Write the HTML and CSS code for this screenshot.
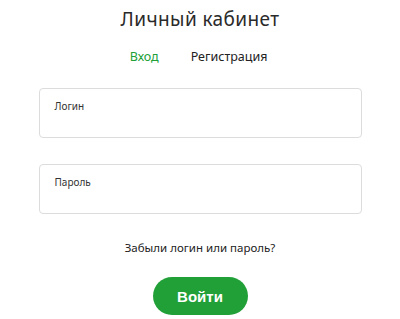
FILE: index.html
```html
<!DOCTYPE html>
<html lang="ru">
  <head>
    <meta charset="UTF-8" />
    <meta name="viewport" content="width=device-width, initial-scale=1.0" />
    <title>Личный кабинет</title>
    <link rel="stylesheet" href="styles.css">
  </head>
  <body>
    <div class="cabinet">
      <h1 class="title">Личный кабинет</h1>
      <ul class="tabs">
        <li class="active"><a href="#">Вход</a></li>
        <li><a href="#">Регистрация</a></li>
      </ul>
      <form class="form">
        <label class="field">
          <span class="field-label">Логин</span>
          <input type="text" />
        </label>
        <label class="field">
          <span class="field-label">Пароль</span>
          <input type="password" />
        </label>
        <a class="forgot" href="#">Забыли логин или пароль?</a>
        <button class="submit" type="button">Войти</button>
      </form>
    </div>
  </body>
</html>
```

FILE: styles.css
```css
* {
  margin: 0;
  padding: 0;
  box-sizing: border-box;
}
ul {
  list-style: none;
}
a {
  text-decoration: none;
  color: inherit;
}
body {
  font-family: "Noto Sans", "Open Sans", sans-serif;
  color: #222;
  background: #fff;
}
.cabinet {
  width: 323px;
  margin: 0 auto;
  padding-top: 5px;
  display: flex;
  flex-direction: column;
  align-items: center;
}
.title {
  font-size: 19px;
  font-weight: 400;
  line-height: 28px;
  color: #2a2a2a;
  letter-spacing: 0.4px;
}
.tabs {
  display: flex;
  gap: 32px;
  margin-top: 15px;
  font-size: 12.5px;
  line-height: 18px;
  margin-right: 3px;
}
.tabs .active a {
  color: #21a038;
}
.form {
  width: 100%;
  margin-top: 22px;
  display: flex;
  flex-direction: column;
  align-items: center;
}
.field {
  width: 100%;
  height: 50px;
  border: 1px solid #dcdcdc;
  border-radius: 4px;
  padding: 10px 15px 0;
  display: flex;
  flex-direction: column;
  margin-bottom: 26px;
}
.field-label {
  font-size: 10px;
  line-height: 14px;
  color: #333;
}
.field input {
  border: none;
  outline: none;
  font: inherit;
  font-size: 13px;
  background: transparent;
}
.forgot {
  margin-top: -1px;
  font-size: 11.5px;
  line-height: 18px;
  color: #222;
}
.submit {
  margin-top: 20px;
  width: 95px;
  height: 38px;
  border: none;
  border-radius: 19px;
  background: #21a038;
  color: #fff;
  font-family: "Liberation Sans", Arial, sans-serif;
  font-weight: 700;
  font-size: 15px;
}
```
